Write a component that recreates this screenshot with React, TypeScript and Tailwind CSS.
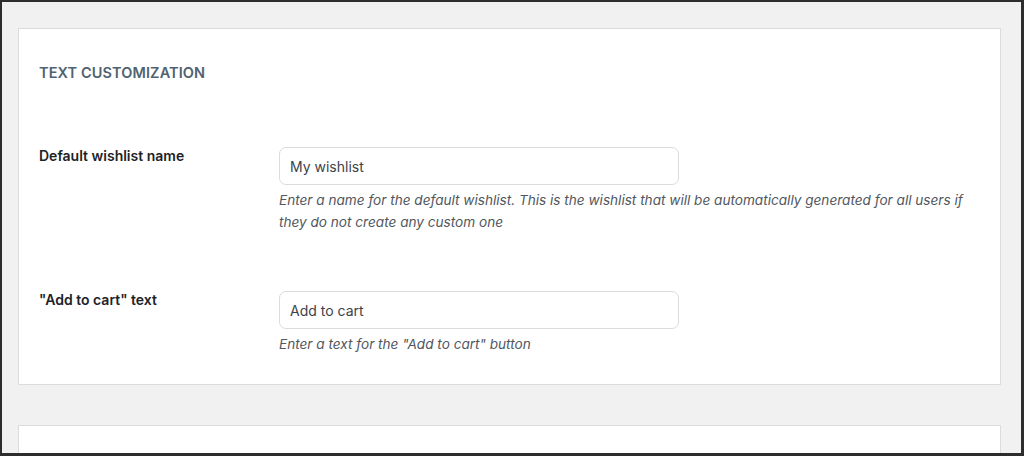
export default function App() {
  const font = { fontFamily: 'Inter, "Noto Sans", sans-serif' };
  return (
    <div
      className="w-[1024px] h-[456px] overflow-hidden bg-[#f1f1f1] border-[#2d2d2d] border-l-2 border-t-2 border-r-[3px] border-b-[3px] pl-4 pr-[20px] pt-[26px] flex flex-col gap-[40px]"
      style={font}
    >
      <div className="bg-white border border-[#dcdcde] h-[357px] shrink-0 pl-[20px] pt-[34px]">
        <h2 className="text-[14.5px] leading-[20px] font-semibold text-[#50626f] tracking-[0.1px]">
          TEXT CUSTOMIZATION
        </h2>
        <div className="flex mt-[64px]">
          <div className="w-[240px] text-[14px] leading-[18px] font-semibold text-[#1d2327]">
            Default wishlist name
          </div>
          <div className="flex flex-col">
            <div className="w-[400px] h-[38px] border border-[#dcdcde] rounded-[7px] px-[10px] flex items-center text-[14px] text-[#3c434a]">
              My wishlist
            </div>
            <p className="mt-[4px] w-[700px] text-[13.6px] leading-[22px] italic text-[#50575e]">
              Enter a name for the default wishlist. This is the wishlist that will be automatically generated for all users if they do not create any custom one
            </p>
          </div>
        </div>
        <div className="flex mt-[58px]">
          <div className="w-[240px] text-[14px] leading-[18px] font-semibold text-[#1d2327]">
            "Add to cart" text
          </div>
          <div className="flex flex-col">
            <div className="w-[400px] h-[38px] border border-[#dcdcde] rounded-[7px] px-[10px] flex items-center text-[14px] text-[#3c434a]">
              Add to cart
            </div>
            <p className="mt-[4px] text-[13.6px] leading-[22px] italic text-[#50575e]">
              Enter a text for the "Add to cart" button
            </p>
          </div>
        </div>
      </div>
      <div className="bg-white border border-[#dcdcde] h-[100px] shrink-0" />
    </div>
  );
}
